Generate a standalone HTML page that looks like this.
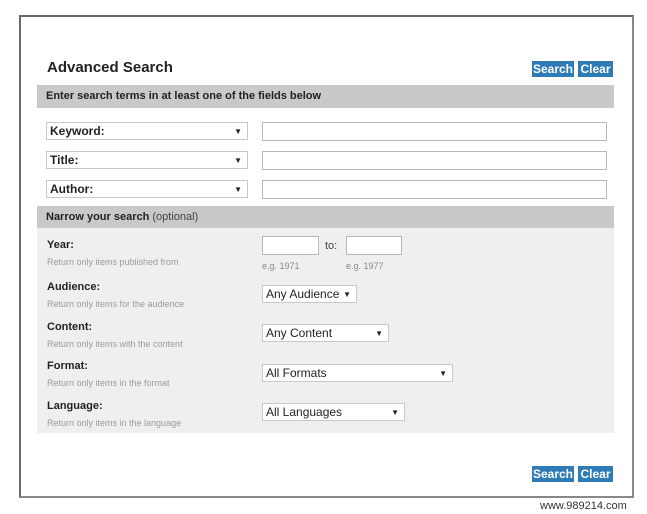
<!DOCTYPE html>
<html><head><meta charset="utf-8"><style>
*{margin:0;padding:0;box-sizing:border-box}
body{width:647px;height:514px;background:#fff;position:relative;font-family:"Liberation Sans",Arial,sans-serif;overflow:hidden}
.a{position:absolute}
.frame{left:19px;top:15px;width:615px;height:483px;border:2px solid #6a6a6a;border-right-color:#888;border-bottom-color:#888}
.btn{background:#2e7bb6;color:#fff;font-weight:bold;font-size:12px;line-height:16px;text-align:center;height:16px}
.bar{left:37px;width:577px;background:#c9c9c9;font-size:11px;font-weight:bold;color:#222;padding-left:9px}
.sel{background:#fff;border:1px solid #c8c8c8;font-size:12px;color:#222;padding-left:3px;line-height:16px}
.sel b{font-weight:bold}
.arr{position:absolute;right:5px;top:1px;font-size:8px}
.inp{background:#fff;border:1px solid #b8b8b8}
.lab{left:47px;font-size:11px;font-weight:bold;color:#222}
.sub{left:47px;font-size:9px;color:#9a9a9a}
</style></head><body>
<div class="a frame"></div>
<div class="a" style="left:47px;top:59px;font-size:15px;font-weight:bold;color:#222">Advanced Search</div>
<div class="a btn" style="left:532px;top:61px;width:42px">Search</div>
<div class="a btn" style="left:578px;top:61px;width:35px">Clear</div>
<div class="a bar" style="top:85px;height:23px;line-height:23px">Enter search terms in at least one of the fields below</div>

<div class="a sel" style="left:46px;top:122px;width:202px;height:18px"><b>Keyword:</b><span class="arr">▼</span></div>
<div class="a inp" style="left:262px;top:122px;width:345px;height:19px"></div>
<div class="a sel" style="left:46px;top:151px;width:202px;height:18px"><b>Title:</b><span class="arr">▼</span></div>
<div class="a inp" style="left:262px;top:151px;width:345px;height:19px"></div>
<div class="a sel" style="left:46px;top:180px;width:202px;height:18px"><b>Author:</b><span class="arr">▼</span></div>
<div class="a inp" style="left:262px;top:180px;width:345px;height:19px"></div>

<div class="a bar" style="top:206px;height:22px;line-height:22px">Narrow your search <span style="font-weight:normal;color:#444">(optional)</span></div>
<div class="a" style="left:37px;top:228px;width:577px;height:205px;background:#efefef"></div>

<div class="a lab" style="top:239px">Year:</div>
<div class="a sub" style="top:257px">Return only items published from</div>
<div class="a inp" style="left:262px;top:236px;width:57px;height:19px"></div>
<div class="a" style="left:325px;top:240px;font-size:11px;color:#444">to:</div>
<div class="a inp" style="left:346px;top:236px;width:56px;height:19px"></div>
<div class="a" style="left:262px;top:261px;font-size:9px;color:#888">e.g. 1971</div>
<div class="a" style="left:346px;top:261px;font-size:9px;color:#888">e.g. 1977</div>

<div class="a lab" style="top:281px">Audience:</div>
<div class="a sub" style="top:299px">Return only items for the audience</div>
<div class="a sel" style="left:262px;top:285px;width:95px;height:18px">Any Audience<span class="arr">▼</span></div>

<div class="a lab" style="top:321px">Content:</div>
<div class="a sub" style="top:339px">Return only items with the content</div>
<div class="a sel" style="left:262px;top:324px;width:127px;height:18px">Any Content<span class="arr">▼</span></div>

<div class="a lab" style="top:360px">Format:</div>
<div class="a sub" style="top:378px">Return only items in the format</div>
<div class="a sel" style="left:262px;top:364px;width:191px;height:18px">All Formats<span class="arr">▼</span></div>

<div class="a lab" style="top:400px">Language:</div>
<div class="a sub" style="top:418px">Return only items in the language</div>
<div class="a sel" style="left:262px;top:403px;width:143px;height:18px">All Languages<span class="arr">▼</span></div>

<div class="a btn" style="left:532px;top:466px;width:42px">Search</div>
<div class="a btn" style="left:578px;top:466px;width:35px">Clear</div>
<div class="a" style="left:540px;top:500px;font-size:11px;color:#333">www.989214.com</div>
</body></html>
